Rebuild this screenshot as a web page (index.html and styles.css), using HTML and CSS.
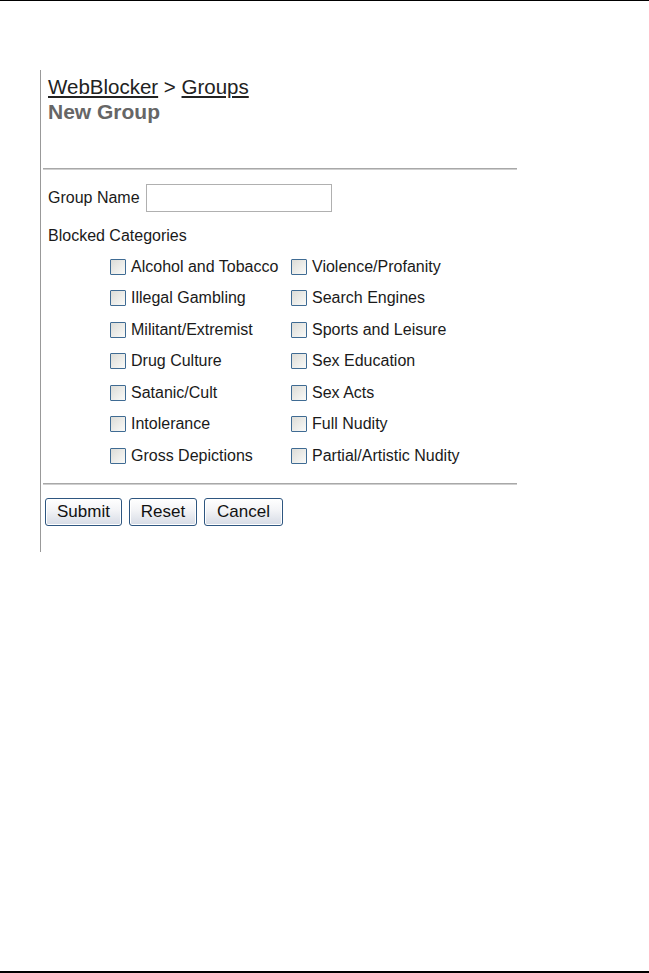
FILE: index.html
```html
<!DOCTYPE html>
<html lang="en">
<head>
<meta charset="UTF-8">
<title>WebBlocker - New Group</title>
<link rel="stylesheet" href="styles.css">
</head>
<body>
<div class="page">
  <div class="panel">
    <div class="crumbs"><a href="#">WebBlocker</a> &gt; <a href="#">Groups</a></div>
    <div class="title">New Group</div>

    <hr class="rule">

    <form class="group-form">
      <div class="name-row">
        <label for="group-name">Group Name</label>
        <input type="text" id="group-name" class="name-input">
      </div>

      <div class="section-label">Blocked Categories</div>

      <div class="categories">
        <label class="cat"><input type="checkbox"> Alcohol and Tobacco</label>
        <label class="cat"><input type="checkbox"> Violence/Profanity</label>
        <label class="cat"><input type="checkbox"> Illegal Gambling</label>
        <label class="cat"><input type="checkbox"> Search Engines</label>
        <label class="cat"><input type="checkbox"> Militant/Extremist</label>
        <label class="cat"><input type="checkbox"> Sports and Leisure</label>
        <label class="cat"><input type="checkbox"> Drug Culture</label>
        <label class="cat"><input type="checkbox"> Sex Education</label>
        <label class="cat"><input type="checkbox"> Satanic/Cult</label>
        <label class="cat"><input type="checkbox"> Sex Acts</label>
        <label class="cat"><input type="checkbox"> Intolerance</label>
        <label class="cat"><input type="checkbox"> Full Nudity</label>
        <label class="cat"><input type="checkbox"> Gross Depictions</label>
        <label class="cat"><input type="checkbox"> Partial/Artistic Nudity</label>
      </div>

      <hr class="rule rule-bottom">

      <div class="buttons">
        <button type="submit" class="btn btn-submit">Submit</button>
        <button type="reset" class="btn btn-reset">Reset</button>
        <button type="button" class="btn btn-cancel">Cancel</button>
      </div>
    </form>
  </div>
</div>
</body>
</html>
```

FILE: styles.css
```css
body {
  margin: 0;
  padding: 0;
  font-family: "Liberation Sans", Arial, sans-serif;
  color: #111;
  background: #fff;
}

.page {
  box-sizing: border-box;
  height: 973px;
  border-top: 1px solid #000;
  border-bottom: 2px solid #000;
  padding-top: 69px;
}

.panel {
  margin-left: 40px;
  width: 476px;
  border-left: 1px solid #999;
  padding: 4px 0 26px 2px;
}

.crumbs, .title {
  padding-left: 5px;
  font-size: 20.5px;
  line-height: 25px;
}

.crumbs {
  color: #222;
}

.crumbs a {
  color: #222;
  text-decoration: underline;
}

.title {
  font-size: 21px;
  font-weight: bold;
  color: #666;
}

.rule {
  margin: 44px 0 0 0;
  height: 0;
  border: 0;
  border-top: 1px solid #a8a8a8;
  border-bottom: 1px solid #cfcfcf;
  width: 474px;
}

.group-form {
  font-size: 16px;
  padding-left: 5px;
  color: #1a1a1a;
}

.group-form .rule {
  margin-left: -5px;
}

.name-row {
  display: flex;
  align-items: center;
  gap: 6px;
  margin-top: 14px;
}

.name-input {
  box-sizing: border-box;
  width: 186px;
  height: 28px;
  margin: 0;
  border: 1px solid #b0b0b0;
  background: #fff;
}

.section-label {
  margin-top: 15px;
  line-height: 18px;
}

.categories {
  display: grid;
  grid-template-columns: 181px auto;
  grid-auto-rows: 31.5px;
  margin: 6px 0 0 62px;
}

.cat {
  display: flex;
  align-items: center;
  gap: 5px;
  white-space: nowrap;
}

.cat input {
  appearance: none;
  -webkit-appearance: none;
  box-sizing: border-box;
  width: 16px;
  height: 16px;
  margin: 0;
  border: 1px solid #3f6b93;
  border-radius: 1px;
  background: linear-gradient(135deg, #dcdcd7, #fafaf8);
}

.rule-bottom {
  margin-top: 11.5px;
}

.buttons {
  display: flex;
  gap: 7px;
  margin: 13px 0 0 -3px;
}

.btn {
  box-sizing: border-box;
  height: 28px;
  padding: 0;
  font-family: "Liberation Sans", Arial, sans-serif;
  font-size: 17px;
  color: #111;
  border: 1px solid #2e5680;
  border-radius: 3px;
  background: linear-gradient(#ffffff, #f2f3f6 45%, #d6dbe5);
  box-shadow: inset 0 0 0 1px #fff;
}

.btn-submit { width: 77px; }
.btn-reset { width: 68px; }
.btn-cancel { width: 79px; }
```
